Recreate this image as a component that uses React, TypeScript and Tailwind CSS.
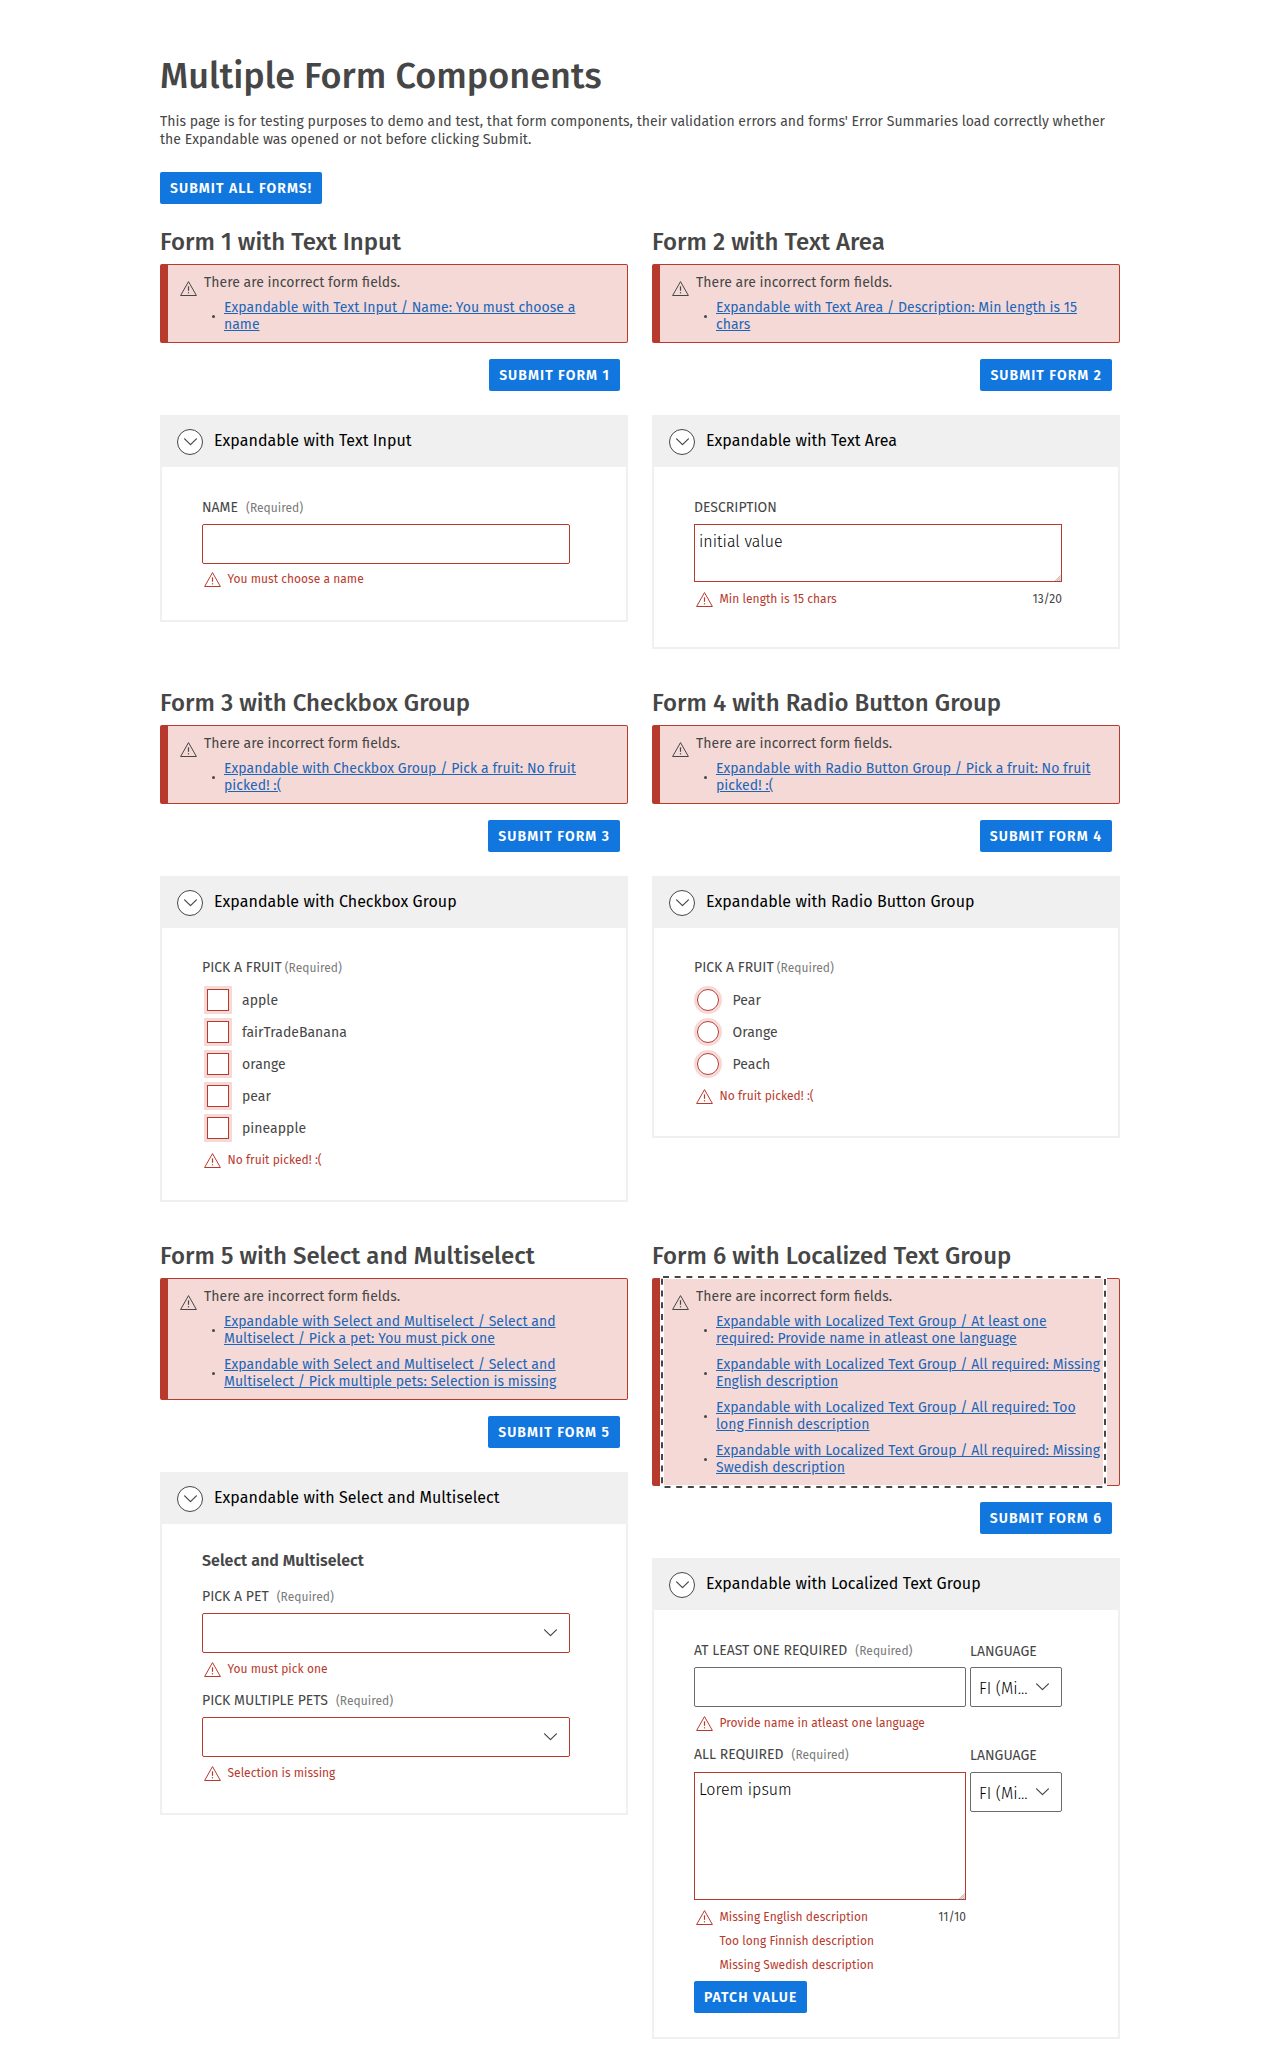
import type { ReactNode } from "react";

function WarningIcon({ className }: { className: string }) {
  return (
    <svg width="17" height="15" viewBox="0 0 17 15" fill="none" stroke="currentColor" className={className}>
      <path d="M8.5 0.6 L16.4 14.5 H0.6 Z" strokeLinejoin="round" strokeWidth="1" />
      <path d="M8.5 5.3 V9.8" strokeWidth="1.2" />
      <path d="M8.5 11.2 V12.4" strokeWidth="1.2" />
    </svg>
  );
}

function Chevron({ className }: { className?: string }) {
  return (
    <svg width="13" height="8" viewBox="0 0 13 8" fill="none" stroke="#464646" strokeWidth="1.2" className={className}>
      <path d="M0.6 0.8 L6.5 6.7 L12.4 0.8" strokeLinecap="round" strokeLinejoin="round" />
    </svg>
  );
}

function FocusRing() {
  return (
    <svg
      fill="none"
      stroke="#464646"
      strokeWidth="2"
      strokeDasharray="6 5.67"
      className="pointer-events-none absolute -top-[3px] -left-[3px] h-[calc(100%+6px)] w-[calc(100%+6px)] overflow-visible"
    >
      <rect x="1" y="1" rx="1" className="h-[calc(100%-2px)] w-[calc(100%-2px)]" />
    </svg>
  );
}

function Button({ children }: { children: ReactNode }) {
  return (
    <button className="h-8 rounded-xs bg-[#1176de] px-2.5 pt-px text-sm leading-4 font-semibold tracking-[1.04px] whitespace-nowrap text-white uppercase">
      {children}
    </button>
  );
}

function ErrorSummary({ links, focused }: { links: string[]; focused?: boolean }) {
  return (
    <div className="rounded-xs border border-l-8 border-[#b83a2d] bg-[#f5d9d6] pl-1">
      <div
        className={
          focused
            ? "relative flex w-[439px] pt-[9px] pb-[9px] pl-2 shadow-[0_0_0_4px_#ffffff]"
            : "flex w-[439px] pt-[9px] pb-[9px] pl-2"
        }
      >
        {focused && <FocusRing />}
        <WarningIcon className="mt-[7px] mr-[7px] shrink-0" />
        <div>
          <p className="text-sm leading-[17px]">There are incorrect form fields.</p>
          <ul className="mt-2 flex flex-col gap-[9px]">
            {links.map((link) => (
              <li key={link} className="flex items-center pl-2">
                <span className="mt-px mr-[9px] size-[3px] shrink-0 rounded-full bg-[#464646]" />
                <a
                  href="#form"
                  className="w-[387px] text-sm leading-[17px] text-[#1b66b9] underline"
                >
                  {link}
                </a>
              </li>
            ))}
          </ul>
        </div>
      </div>
    </div>
  );
}

function Expandable({ title, className, children }: { title: string; className: string; children: ReactNode }) {
  return (
    <section className="mt-6">
      <header className="flex h-[52px] items-start bg-[#f0f0f0] pt-3.5 pl-[17px]">
        <span className="mr-[11px] flex size-[26px] items-center justify-center rounded-full border border-[#464646] bg-white">
          <Chevron />
        </span>
        <h3 className="mt-0.5 text-base leading-[19px] text-black">{title}</h3>
      </header>
      <div className={`border-2 border-t-0 border-[#f0f0f0] pl-10 ${className}`}>{children}</div>
    </section>
  );
}

function Form({
  index,
  name,
  title,
  links,
  focused,
  bodyClass,
  children,
}: {
  index: number;
  name: string;
  title: string;
  links: string[];
  focused?: boolean;
  bodyClass: string;
  children: ReactNode;
}) {
  return (
    <form>
      <h2 className="mb-2 text-2xl leading-7 font-medium">
        Form {index} with {name}
      </h2>
      <ErrorSummary links={links} focused={focused} />
      <div className="mt-4 flex justify-end pr-2">
        <Button>Submit form {index}</Button>
      </div>
      <Expandable title={title} className={bodyClass}>
        {children}
      </Expandable>
    </form>
  );
}

function Label({ text, required, tight }: { text: string; required?: boolean; tight?: boolean }) {
  return (
    <div className="flex h-[17px] items-baseline text-sm leading-[17px] whitespace-nowrap">
      <span className="tracking-normal uppercase">{text}</span>
      {required && (
        <span className={tight ? "ml-[3px] text-xs leading-4 text-[#7a7a7a]" : "ml-2 text-xs leading-4 text-[#7a7a7a]"}>
          (Required)
        </span>
      )}
    </div>
  );
}

function FieldError({ children, plain }: { children: ReactNode; plain?: boolean }) {
  return (
    <p className="flex h-4 items-start text-xs leading-4 text-[#b83a2d]">
      {plain ? <span className="w-[25.5px]" /> : <WarningIcon className="mt-px mr-[7px] ml-[1.5px] shrink-0" />}
      {children}
    </p>
  );
}

function TextArea({ value, className }: { value: string; className: string }) {
  return (
    <div className={`relative ${className}`}>
      <textarea
        defaultValue={value}
        className="block size-full resize-none border border-[#b83a2d] px-1 pt-[7px] text-base leading-[19px] font-light text-black"
      />
      <svg
        width="6"
        height="6"
        viewBox="0 0 6 6"
        stroke="#8c8c8c"
        strokeWidth="0.8"
        className="pointer-events-none absolute right-px bottom-px"
      >
        <path d="M0.3 6 L6 0.3 M2.3 6 L6 2.3 M4.3 6 L6 4.3" />
      </svg>
    </div>
  );
}

function Dropdown() {
  return (
    <div className="flex h-10 w-[368px] items-start justify-end rounded-xs border border-[#b83a2d] pr-3">
      <Chevron className="mt-[15px]" />
    </div>
  );
}

function Language({ low }: { low?: boolean }) {
  return (
    <div className="w-[92px]">
      <div className="pt-px">
        <Label text="Language" />
      </div>
      <div
        className={
          low
            ? "mt-2 flex h-10 items-start justify-between rounded-xs border border-[#6b6b6b] pr-3 pl-2"
            : "mt-[7px] flex h-10 items-start justify-between rounded-xs border border-[#6b6b6b] pr-3 pl-2"
        }
      >
        <span className="mt-[11px] text-base leading-[19px] font-light text-black">FI (Mi...</span>
        <Chevron className="mt-[15px]" />
      </div>
    </div>
  );
}

export default function App() {
  return (
    <main className="mx-auto min-h-[2071px] w-[960px] bg-white pt-[54px] pb-8 font-['Fira_Sans','Noto_Sans',sans-serif] tracking-[0.027px] text-[#464646] [font-feature-settings:'liga'_1]">
      <h1 className="text-4xl leading-[44px] font-medium">Multiple Form Components</h1>
      <p className="mt-[15px] text-sm leading-[18px]">
        This page is for testing purposes to demo and test, that form components, their validation errors and forms'
        Error Summaries load correctly whether the Expandable was opened or not before clicking Submit.
      </p>
      <div className="mt-[23px] mb-6 flex">
        <Button>Submit all forms!</Button>
      </div>

      <div className="grid grid-cols-2 gap-x-6 gap-y-10">
        <Form
          index={1}
          name="Text Input"
          title="Expandable with Text Input"
          links={["Expandable with Text Input / Name: You must choose a name"]}
          bodyClass="pt-8 pb-[33px]"
        >
          <Label text="Name" required />
          <input className="mt-2 mb-[7px] block h-10 w-[368px] rounded-xs border border-[#b83a2d]" />
          <FieldError>You must choose a name</FieldError>
        </Form>

        <Form
          index={2}
          name="Text Area"
          title="Expandable with Text Area"
          links={["Expandable with Text Area / Description: Min length is 15 chars"]}
          bodyClass="pt-8 pb-10"
        >
          <Label text="Description" />
          <TextArea value="initial value" className="mt-2 mb-[9px] h-[58px] w-[368px]" />
          <div className="flex w-[368px] justify-between">
            <FieldError>Min length is 15 chars</FieldError>
            <span className="text-xs leading-4">13/20</span>
          </div>
        </Form>

        <Form
          index={3}
          name="Checkbox Group"
          title="Expandable with Checkbox Group"
          links={["Expandable with Checkbox Group / Pick a fruit: No fruit picked! :("]}
          bodyClass="pt-[31px] pb-8"
        >
          <Label text="Pick a fruit" required tight />
          <div className="my-2.5 flex flex-col gap-1 pl-0.5">
            {["apple", "fairTradeBanana", "orange", "pear", "pineapple"].map((fruit) => (
              <label key={fruit} className="flex h-7 items-center text-sm leading-[17px]">
                <span className="mr-2.5 size-7 border-3 border-[#f5d9d6]">
                  <span className="block size-[22px] border border-[#b83a2d]" />
                </span>
                {fruit}
              </label>
            ))}
          </div>
          <FieldError>No fruit picked! :(</FieldError>
        </Form>

        <Form
          index={4}
          name="Radio Button Group"
          title="Expandable with Radio Button Group"
          links={["Expandable with Radio Button Group / Pick a fruit: No fruit picked! :("]}
          bodyClass="pt-[31px] pb-8"
        >
          <Label text="Pick a fruit" required tight />
          <div className="my-2.5 flex flex-col gap-1">
            {["Pear", "Orange", "Peach"].map((fruit) => (
              <label key={fruit} className="flex h-7 items-center text-sm leading-[17px]">
                <span className="mr-[10.5px] size-7 rounded-full border-3 border-[#f5d9d6]">
                  <span className="block size-[22px] rounded-full border border-[#b83a2d]" />
                </span>
                {fruit}
              </label>
            ))}
          </div>
          <FieldError>No fruit picked! :(</FieldError>
        </Form>

        <Form
          index={5}
          name="Select and Multiselect"
          title="Expandable with Select and Multiselect"
          links={[
            "Expandable with Select and Multiselect / Select and Multiselect / Pick a pet: You must pick one",
            "Expandable with Select and Multiselect / Select and Multiselect / Pick multiple pets: Selection is missing",
          ]}
          bodyClass="pt-[27px] pb-8"
        >
          <h4 className="mb-[18px] text-base leading-[19px] font-semibold">Select and Multiselect</h4>
          <Label text="Pick a pet" required />
          <div className="mt-2 mb-2">
            <Dropdown />
          </div>
          <FieldError>You must pick one</FieldError>
          <div className="mt-[15px] mb-2">
            <Label text="Pick multiple pets" required />
          </div>
          <div className="mb-2">
            <Dropdown />
          </div>
          <FieldError>Selection is missing</FieldError>
        </Form>

        <Form
          index={6}
          name="Localized Text Group"
          title="Expandable with Localized Text Group"
          links={[
            "Expandable with Localized Text Group / At least one required: Provide name in atleast one language",
            "Expandable with Localized Text Group / All required: Missing English description",
            "Expandable with Localized Text Group / All required: Too long Finnish description",
            "Expandable with Localized Text Group / All required: Missing Swedish description",
          ]}
          focused
          bodyClass="pt-8 pb-6"
        >
          <div className="flex gap-1">
            <div className="w-[272px]">
              <Label text="At least one required" required />
              <input className="mt-2 mb-2 block h-10 w-full rounded-xs border border-[#6b6b6b]" />
              <FieldError>Provide name in atleast one language</FieldError>
            </div>
            <Language />
          </div>
          <div className="mt-[15px] flex gap-1">
            <div className="w-[272px]">
              <Label text="All required" required />
              <TextArea value="Lorem ipsum" className="mt-[9px] mb-[9px] h-32 w-full" />
              <div className="flex justify-between">
                <FieldError>Missing English description</FieldError>
                <span className="text-xs leading-4">11/10</span>
              </div>
              <div className="mt-2 flex flex-col gap-2">
                <FieldError plain>Too long Finnish description</FieldError>
                <FieldError plain>Missing Swedish description</FieldError>
              </div>
            </div>
            <Language low />
          </div>
          <div className="mt-2 flex">
            <Button>Patch value</Button>
          </div>
        </Form>
      </div>
    </main>
  );
}
